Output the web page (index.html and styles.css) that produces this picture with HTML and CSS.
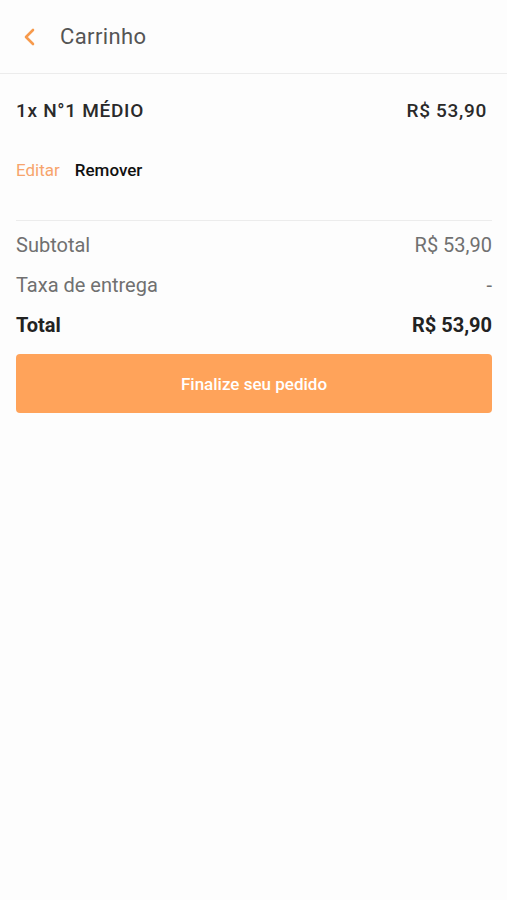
FILE: index.html
```html
<!DOCTYPE html>
<html lang="pt-BR">
<head>
  <meta charset="UTF-8">
  <meta name="viewport" content="width=device-width, initial-scale=1.0">
  <title>Carrinho</title>
  <link rel="stylesheet" href="styles.css">
</head>
<body>
  <!-- Header -->
  <header class="top-bar">
    <button class="back-btn" aria-label="Voltar">
      <svg width="14" height="18" viewBox="0 0 14 18">
        <polyline points="10,2 3,9 10,16" fill="none" stroke="#f79a4c" stroke-width="2.6" stroke-linecap="round" stroke-linejoin="round"></polyline>
      </svg>
    </button>
    <h1 class="title">Carrinho</h1>
  </header>

  <!-- Cart -->
  <main class="cart">
    <div class="item">
      <div class="item-row">
        <span class="item-name">1x N°1 MÉDIO</span>
        <span class="item-price">R$ 53,90</span>
      </div>
      <div class="item-actions">
        <a class="edit">Editar</a>
        <a class="remove">Remover</a>
      </div>
    </div>

    <div class="summary">
      <div class="summary-row">
        <span>Subtotal</span>
        <span>R$ 53,90</span>
      </div>
      <div class="summary-row">
        <span>Taxa de entrega</span>
        <span>-</span>
      </div>
      <div class="summary-row total">
        <span>Total</span>
        <span>R$ 53,90</span>
      </div>
    </div>

    <button class="checkout">Finalize seu pedido</button>
  </main>
</body>
</html>
```

FILE: styles.css
```css
/* General */
body {
  font-family: Roboto, 'Noto Sans', sans-serif;
  margin: 0;
  padding: 0;
  background: #fdfdfd;
  color: #222;
  min-height: 100vh;
}

/* Header */
.top-bar {
  height: 73px;
  display: flex;
  align-items: center;
  border-bottom: 1px solid #ececec;
  padding: 0 20px;
}

.back-btn {
  background: none;
  border: none;
  padding: 0;
  width: 20px;
  height: 24px;
  display: flex;
  align-items: center;
  justify-content: center;
  margin-right: 20px;
  cursor: pointer;
}

.title {
  margin: 0;
  font-size: 22px;
  font-weight: 400;
  color: #555;
  letter-spacing: 0.4px;
}

/* Cart */
.cart {
  padding: 0 15px 0 16px;
}

.item {
  border-bottom: 1px solid #ececec;
  padding: 26px 0 40px;
}

.item-row {
  display: flex;
  justify-content: space-between;
  align-items: center;
  padding-right: 5px;
  line-height: 22px;
}

.item-name,
.item-price {
  font-size: 19px;
  font-weight: 500;
  letter-spacing: 0.7px;
  color: #2a2a2a;
}

.item-actions {
  margin-top: 38px;
  display: flex;
  gap: 15px;
  font-size: 17px;
  line-height: 20px;
}

.edit {
  color: #f7a46c;
}

.remove {
  color: #111;
  font-weight: 500;
}

/* Summary */
.summary {
  padding-top: 4px;
}

.summary-row {
  display: flex;
  justify-content: space-between;
  font-size: 20px;
  font-weight: 400;
  color: #707070;
  height: 40px;
  align-items: center;
}

.summary-row.total {
  color: #222;
  font-weight: 700;
}

/* Checkout Button */
.checkout {
  width: 100%;
  height: 59px;
  margin-top: 9px;
  background: #ffa35a;
  color: #fff;
  border: none;
  border-radius: 4px;
  font-family: inherit;
  font-size: 17px;
  font-weight: 500;
  cursor: pointer;
}
```
